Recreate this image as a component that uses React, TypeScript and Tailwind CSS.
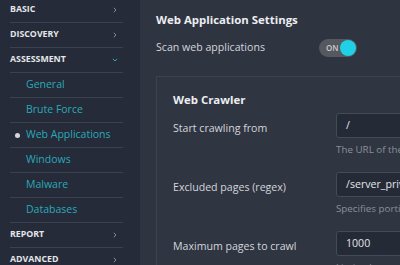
import React from "react";

const Chevron = ({ down = false }: { down?: boolean }) => (
  <svg width="8" height="8" viewBox="0 0 8 8" className={down ? "text-[#2aa9ba]" : "text-[#858b96]"}>
    {down ? (
      <path d="M1.8 2.8 L4 5 L6.2 2.8" fill="none" stroke="currentColor" strokeWidth="1" />
    ) : (
      <path d="M2.8 1.8 L5 4 L2.8 6.2" fill="none" stroke="currentColor" strokeWidth="1" />
    )}
  </svg>
);

const Section = ({ label, down = false, first = false }: { label: string; down?: boolean; first?: boolean }) => (
  <div className={`flex items-center justify-between border-b border-[#3a4150] pr-[4px] ${first ? "h-[25px] -mt-[2px]" : "h-[25px]"}`}>
    <span className="text-[8.8px] font-bold text-[#e4e6ea]">{label}</span>
    <Chevron down={down} />
  </div>
);

const Item = ({ label, active = false }: { label: string; active?: boolean }) => (
  <div className="relative flex h-[25px] items-center border-b border-[#3a4150] pl-[16px]">
    {active && <span className="absolute left-[5px] top-[10px] h-[5px] w-[5px] rounded-full bg-[#d4d6da]" />}
    <span className="text-[10.5px] text-[#2aa9ba]">{label}</span>
  </div>
);

const Field = ({ label, value, help }: { label: string; value: string; help: string }) => (
  <div className="flex">
    <div className="w-[163px] shrink-0 pt-[7px] text-[10.6px] leading-[16px] text-[#d3d6dc]">{label}</div>
    <div className="w-[300px] shrink-0">
      <div className="flex h-[25px] items-center rounded-[3px] border border-[#434b59] bg-[#242a36] px-[9px] text-[10.6px] text-[#e4e6ea]">
        {value}
      </div>
      <div className="mt-[5px] h-[14px] text-[9.8px] leading-[14px] text-[#8b9099]">{help}</div>
    </div>
  </div>
);

export default function App() {
  return (
    <div
      className="flex h-[265px] w-[400px] overflow-hidden bg-[#2f3441]"
      style={{ fontFamily: '"Open Sans", "Noto Sans", sans-serif' }}
    >
      <div className="w-[140px] shrink-0 bg-[#252b38] pl-[10px] pr-[17px]">
        <Section label="BASIC" first />
        <Section label="DISCOVERY" />
        <Section label="ASSESSMENT" down />
        <Item label="General" />
        <Item label="Brute Force" />
        <Item label="Web Applications" active />
        <Item label="Windows" />
        <Item label="Malware" />
        <Item label="Databases" />
        <Section label="REPORT" />
        <Section label="ADVANCED" />
      </div>
      <div className="w-[500px] shrink-0 pl-[16px] pt-[11px]">
        <div className="text-[11.4px] font-bold leading-[18px] text-[#eceef1]">Web Application Settings</div>
        <div className="mt-[10px] flex h-[18px] items-center">
          <div className="w-[163px] shrink-0 text-[10.6px] text-[#d3d6dc]">Scan web applications</div>
          <div className="flex h-[18px] w-[38px] items-center justify-between rounded-full bg-[#55585e] pl-[7px] pr-[1px]">
            <span className="text-[8px] font-semibold text-[#c9cbce]">ON</span>
            <span className="h-[16px] w-[16px] rounded-full bg-[#1fd0e6]" />
          </div>
        </div>
        <div className="mt-[19px] border border-[#3b4250] bg-[#303542] pl-[16px] pt-[15px]">
          <div className="text-[11.4px] font-bold leading-[16px] text-[#eceef1]">Web Crawler</div>
          <div className="mt-[5px] flex flex-col gap-[15px]">
            <Field label="Start crawling from" value="/" help="The URL of the crawler starting point" />
            <Field label="Excluded pages (regex)" value="/server_private" help="Specifies portions of the site to skip" />
            <Field label="Maximum pages to crawl" value="1000" help="Limits the crawl" />
          </div>
        </div>
      </div>
    </div>
  );
}
